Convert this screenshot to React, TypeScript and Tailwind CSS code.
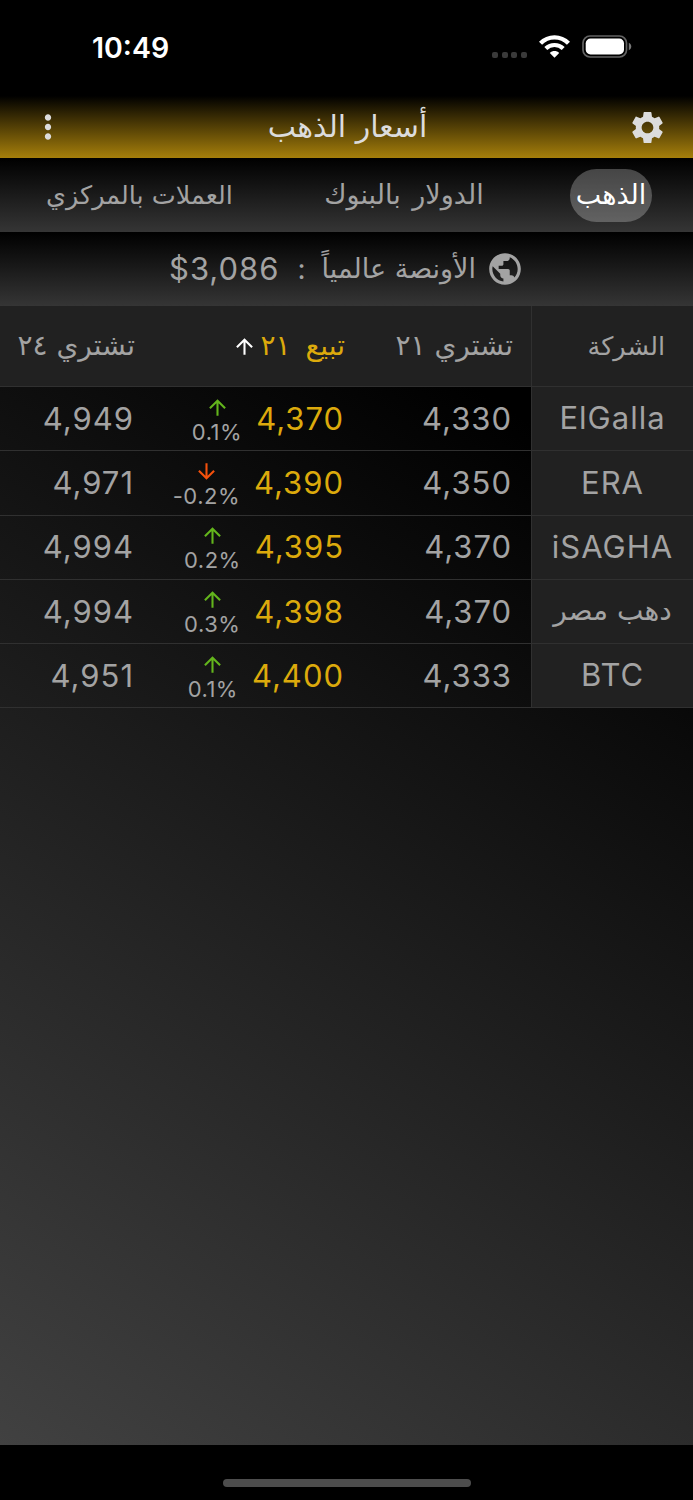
import React from 'react'
import { MdArrowDownward, MdArrowUpward, MdMoreVert, MdPublic, MdSettings } from 'react-icons/md'

interface Price {
  company: string
  arabic?: boolean
  buy21: string
  sell21: string
  change: string
  down?: boolean
  buy24: string
}

const prices: Price[] = [
  { company: 'ElGalla', buy21: '4,330', sell21: '4,370', change: '0.1%', buy24: '4,949' },
  { company: 'ERA', buy21: '4,350', sell21: '4,390', change: '-0.2%', down: true, buy24: '4,971' },
  { company: 'iSAGHA', buy21: '4,370', sell21: '4,395', change: '0.2%', buy24: '4,994' },
  { company: 'دهب مصر', arabic: true, buy21: '4,370', sell21: '4,398', change: '0.3%', buy24: '4,994' },
  { company: 'BTC', buy21: '4,333', sell21: '4,400', change: '0.1%', buy24: '4,951' },
]

const arabicFont = "font-['DejaVu_Sans',sans-serif]"
const columns = 'grid grid-cols-[162px_168px_210px_153px]'
const barGradient = 'bg-[linear-gradient(to_bottom,#000,#353535)]'

function StatusBar() {
  return (
    <div className="h-24 flex items-start justify-between pl-[92px] pr-[61px] text-white">
      <span className="mt-[30px] text-[28.5px] leading-[35px] font-semibold">10:49</span>
      <div className="mt-[35px] flex items-start">
        <div className="mt-[17px] mr-3 flex gap-[3.6px]">
          {[0, 1, 2, 3].map((dot) => (
            <span key={dot} className="w-[6px] h-[6px] rounded-[2px] bg-[#3a3a3a]" />
          ))}
        </div>
        <svg className="w-[31px] h-[23px]" viewBox="0 0 31 23" fill="none">
          <path d="M1.500 8.300C9.300.4 21.700.4 29.500 8.300" stroke="white" strokeWidth="4.400" />
          <path d="M6.800 13.600c4.900-4.800 12.500-4.800 17.400 0" stroke="white" strokeWidth="4.200" />
          <path d="M10.800 17.900c2.700-2.500 6.700-2.500 9.400 0L15.500 22.800z" fill="white" />
        </svg>
        <svg className="ml-3 w-[50px] h-[23px]" viewBox="0 0 50 23" fill="none">
          <rect x="1" y="1" width="43.500" height="21" rx="7" stroke="#636363" strokeWidth="1.700" />
          <rect x="3.700" y="3.500" width="38.300" height="16" rx="4.800" fill="white" />
          <path d="M46.800 7.800c3.300 1.500 3.300 6 0 7.400z" fill="#777" />
        </svg>
      </div>
    </div>
  )
}

function Header() {
  return (
    <div className="h-[62px] flex items-center justify-between pr-[26px] pl-[29px] bg-[linear-gradient(to_bottom,#000,#a67f0b)] text-[#dcdcdc]">
      <MdSettings size={39} />
      <h1 className={`${arabicFont} text-[30px] leading-[40px]`}>أسعار الذهب</h1>
      <MdMoreVert size={38} />
    </div>
  )
}

function Tabs() {
  return (
    <div
      className={`${arabicFont} ${barGradient} h-[74px] flex items-center justify-between pr-[41px] pl-[46px] text-[27px] text-[#a3a3a3]`}
    >
      <div className="w-[82px] h-[53px] flex items-center justify-center rounded-full bg-white/25 text-white">
        الذهب
      </div>
      <div className="pl-[5px] [word-spacing:3px]">الدولار بالبنوك</div>
      <div className="text-[25.5px]">العملات بالمركزي</div>
    </div>
  )
}

function Ounce() {
  return (
    <div className={`${barGradient} h-[74px] flex items-center justify-center text-[#a3a3a3]`}>
      <MdPublic size={38} className="ml-[10px]" />
      <span className={`${arabicFont} text-[27px]`}>الأونصة عالمياً</span>
      <span className="mr-4 ml-[18px] text-[28px]">:</span>
      <span dir="ltr" className="text-[31px] tracking-[1px]">
        $3,086
      </span>
    </div>
  )
}

function TableHead() {
  return (
    <div
      className={`${arabicFont} ${columns} h-[81px] items-stretch border-b border-[#303030] bg-[#212121] text-[28px] text-[#a3a3a3]`}
    >
      <div className="flex items-center pr-7 border-l border-[#303030] text-[25.5px]">الشركة</div>
      <div className="flex items-center pr-[18px]">تشتري ٢١</div>
      <div className="flex items-center pr-[18px] text-[#dcaa0c]">
        <span className="[word-spacing:6px]">تبيع ٢١</span>
        <MdArrowUpward size={25} className="mr-[3px] text-white" />
      </div>
      <div className="flex items-center pr-[18px]">تشتري ٢٤</div>
    </div>
  )
}

function PriceRow({ price }: { price: Price }) {
  return (
    <div className={`${columns} h-[64.25px] border-b border-[#303030] text-[31px] tracking-[1px] text-[#a3a3a3]`}>
      <div className="flex items-center justify-center border-l border-[#303030] bg-[#212121]">
        {price.arabic ? (
          <span className={`${arabicFont} text-[28px] tracking-normal`}>{price.company}</span>
        ) : (
          <span dir="ltr">{price.company}</span>
        )}
      </div>
      <div className="flex items-center pt-px pr-[19px]">{price.buy21}</div>
      <div className="flex items-center pt-px pr-[19px]">
        <span className="text-[#dcaa0c]">{price.sell21}</span>
        <div className="mr-[14px] flex flex-col items-center">
          {price.down ? (
            <MdArrowDownward size={25} className="text-[#f4500c]" />
          ) : (
            <MdArrowUpward size={25} className="text-[#63b51c]" />
          )}
          <span dir="ltr" className="text-[22px] leading-6 tracking-[0.5px]">
            {price.change}
          </span>
        </div>
      </div>
      <div className="flex items-center pt-px pr-[19px]">{price.buy24}</div>
    </div>
  )
}

export default function App() {
  return (
    <div
      dir="rtl"
      className="w-[693px] h-[1500px] flex flex-col overflow-hidden bg-black font-['Inter',sans-serif]"
    >
      <div dir="ltr">
        <StatusBar />
      </div>
      <Header />
      <Tabs />
      <Ounce />
      <main className="h-[1139px] bg-[linear-gradient(213deg,#000_14%,#414141_100%)]">
        <TableHead />
        {prices.map((price) => (
          <PriceRow key={price.company} price={price} />
        ))}
      </main>
      {/* Home indicator */}
      <div className="flex-1 flex justify-center">
        <div className="mt-[34px] w-[248px] h-2 rounded-full bg-[#4d4d4d]" />
      </div>
    </div>
  )
}
